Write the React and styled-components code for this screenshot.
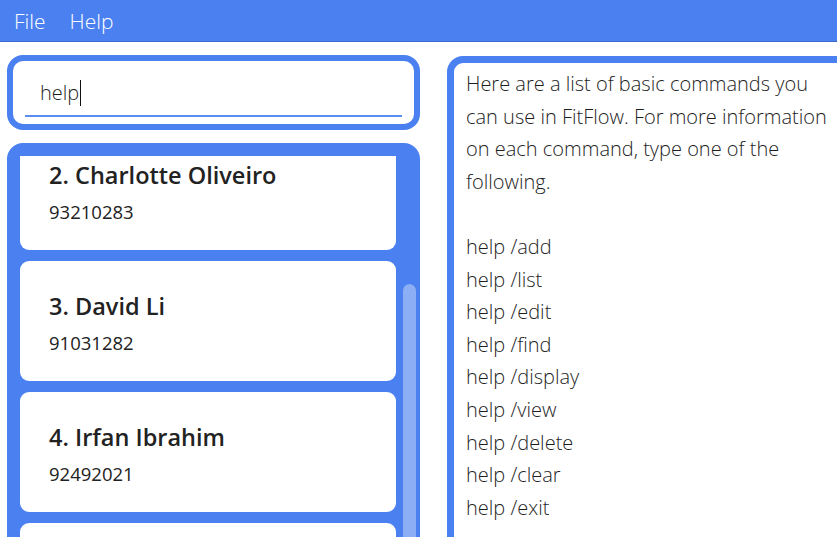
import React, { useLayoutEffect, useRef } from 'react';
import styled, { createGlobalStyle } from 'styled-components';

const BLUE = '#4a80ef';

const GlobalStyle = createGlobalStyle`
  html, body {
    margin: 0;
    padding: 0;
    overflow: hidden;
    background: #fff;
  }
`;

const Shell = styled.div`
  height: 560px;
  display: flex;
  flex-direction: column;
  font-family: 'Open Sans', 'Noto Sans', sans-serif;
  color: #1e1e1e;
`;

const MenuBar = styled.div`
  height: 41px;
  flex-shrink: 0;
  background: ${BLUE};
  border-bottom: 1px solid #3d6ccc;
  display: flex;
  align-items: center;
  padding-left: 14px;
  gap: 24px;
`;

const MenuItem = styled.span`
  color: #fff;
  font-size: 21px;
  font-weight: 300;
`;

const Main = styled.div`
  flex: 1;
  min-height: 0;
  display: flex;
  padding: 13px 0 0 7px;
  gap: 27px;
`;

const LeftColumn = styled.div`
  width: 413px;
  flex-shrink: 0;
  display: flex;
  flex-direction: column;
  gap: 13px;
`;

const SearchBox = styled.div`
  height: 63px;
  border: 6px solid ${BLUE};
  border-radius: 16px;
  padding: 0 12px;
  display: flex;
  align-items: flex-end;
`;

const SearchInput = styled.div`
  flex: 1;
  height: 44px;
  border-bottom: 2px solid #5b8cf1;
  margin-bottom: 7px;
  padding-left: 15px;
  font-size: 20px;
  font-weight: 300;
  line-height: 40px;
  display: flex;
  align-items: center;
`;

const Caret = styled.span`
  display: inline-block;
  width: 1px;
  height: 26px;
  background: #111;
  margin-left: 1px;
`;

const ListPanel = styled.div`
  flex: 1;
  min-height: 0;
  background: ${BLUE};
  border-radius: 16px;
  padding: 13px 4px 0 13px;
  display: flex;
`;

const CardViewport = styled.div`
  width: 376px;
  overflow: hidden;
  display: flex;
  flex-direction: column;
  gap: 11px;
`;

const Card = styled.div`
  flex-shrink: 0;
  height: 120px;
  box-sizing: border-box;
  background: #fff;
  border-radius: 9px;
  padding: 28px 29px 0;
`;

const CardTitle = styled.div`
  font-size: 23.5px;
  font-weight: 600;
  line-height: 34px;
  color: #222;
`;

const CardPhone = styled.div`
  margin-top: 8px;
  font-size: 18.5px;
  line-height: 24px;
  color: #222;
`;

const ScrollTrack = styled.div`
  width: 13px;
  margin-left: 7px;
  display: flex;
  flex-direction: column;
`;

const ScrollThumb = styled.div`
  margin-top: 128px;
  flex: 1;
  background: #8caef4;
  border-radius: 7px;
`;

const ResultPanel = styled.div`
  flex: 1;
  align-self: flex-start;
  margin-top: 1px;
  height: 520px;
  min-width: 420px;
  border: 7px solid ${BLUE};
  border-right: none;
  border-radius: 16px 0 0 16px;
  padding: 5px 0 0 12px;
  font-size: 20px;
  font-weight: 300;
  line-height: 32.6px;
  white-space: pre-wrap;
  color: #1e1e1e;
`;

const persons = [
  { name: 'Alex Yeoh', phone: '87438807' },
  { name: 'Charlotte Oliveiro', phone: '93210283' },
  { name: 'David Li', phone: '91031282' },
  { name: 'Irfan Ibrahim', phone: '92492021' },
  { name: 'Roy Balakrishnan', phone: '92624417' },
];

const helpText = `Here are a list of basic commands you
can use in FitFlow. For more information
on each command, type one of the
following.

help /add
help /list
help /edit
help /find
help /display
help /view
help /delete
help /clear
help /exit`;

export default function App() {
  const listRef = useRef(null);

  useLayoutEffect(() => {
    if (listRef.current) listRef.current.scrollTop = 157;
  }, []);

  return (
    <Shell>
      <GlobalStyle />
      <MenuBar>
        <MenuItem>File</MenuItem>
        <MenuItem>Help</MenuItem>
      </MenuBar>
      <Main>
        <LeftColumn>
          <SearchBox>
            <SearchInput>
              help
              <Caret />
            </SearchInput>
          </SearchBox>
          <ListPanel>
            <CardViewport ref={listRef}>
              {persons.map((p, i) => (
                <Card key={p.name}>
                  <CardTitle>
                    {i + 1}. {p.name}
                  </CardTitle>
                  <CardPhone>{p.phone}</CardPhone>
                </Card>
              ))}
            </CardViewport>
            <ScrollTrack>
              <ScrollThumb />
            </ScrollTrack>
          </ListPanel>
        </LeftColumn>
        <ResultPanel>{helpText}</ResultPanel>
      </Main>
    </Shell>
  );
}
